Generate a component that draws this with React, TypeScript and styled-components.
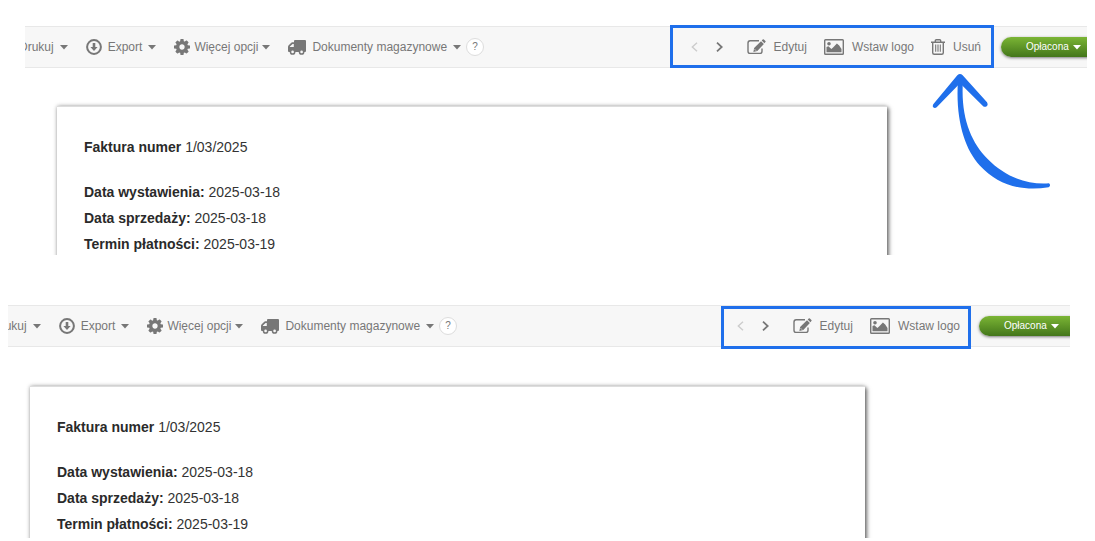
import React from 'react';
import styled, { createGlobalStyle } from 'styled-components';

const GlobalStyle = createGlobalStyle`
  *, *::before, *::after { box-sizing: border-box; }
  body {
    margin: 0;
    background: #fff;
    font-family: "Liberation Sans", Arial, sans-serif;
  }
`;

const Page = styled.main`
  display: flex;
  flex-direction: column;
  gap: 50px;
  padding-top: 26px;
`;

const Panel = styled.section<{ $left: number; $right: number }>`
  margin: -1px ${p => p.$right}px 0 ${p => p.$left}px;
  padding-top: 1px;
  overflow: hidden;
`;

const Toolbar = styled.div`
  display: flex;
  align-items: center;
  justify-content: space-between;
  height: 42px;
  background: #f7f7f7;
  border-top: 1px solid #e8e8e8;
  border-bottom: 1px solid #e8e8e8;
`;

const MenuGroup = styled.div`
  display: flex;
  align-items: center;
  gap: 18px;
`;

const ToolButton = styled.button<{ $gap?: number }>`
  display: flex;
  align-items: center;
  gap: ${p => p.$gap ?? 6}px;
  padding: 0;
  border: 0;
  background: none;
  color: #777;
  font: 12px/16px "Liberation Sans", Arial, sans-serif;
  white-space: nowrap;
  cursor: pointer;

  &:disabled { color: #ccc; cursor: default; }
  svg { display: block; flex: none; }
`;

const FirstItem = styled.div<{ $shift: number }>`
  margin-left: -${p => p.$shift}px;
`;

const WithHelp = styled.div`
  display: flex;
  align-items: center;
  gap: 5px;
`;

const HelpButton = styled.button`
  width: 18px;
  height: 18px;
  padding: 0;
  border: 1px solid #ddd;
  border-radius: 50%;
  background: #fff;
  color: #777;
  font: 10px/16px "Liberation Sans", Arial, sans-serif;
  text-align: center;
`;

const RightSide = styled.div<{ $gap: number }>`
  display: flex;
  align-items: center;
  gap: ${p => p.$gap}px;
`;

const Highlighted = styled.div<{ $left: number; $right: number; $drop: number }>`
  position: relative;
  display: flex;
  align-items: center;
  gap: 17px;
  height: 42px;
  padding: 0 ${p => p.$right}px 0 ${p => p.$left}px;

  &::after {
    content: '';
    position: absolute;
    inset: ${p => p.$drop}px 0 auto;
    height: 43px;
    border: 3px solid #1f6feb;
    pointer-events: none;
  }
`;

const Pager = styled.div`
  display: flex;
  gap: 18px;
  margin-right: 7px;
`;

const StatusButton = styled.button<{ $clip: number }>`
  display: flex;
  align-items: center;
  gap: 4px;
  width: 110px;
  height: 20px;
  margin-right: -${p => p.$clip}px;
  padding: 0 0 0 25px;
  border: 0;
  border-radius: 10px;
  background: linear-gradient(#7bb535, #43761a);
  box-shadow: 0 1px 3px rgba(0, 0, 0, 0.5);
  color: #fff;
  font: 10px/20px "Liberation Sans", Arial, sans-serif;
  white-space: nowrap;
`;

const Arrow = styled.svg`
  position: absolute;
  top: 47px;
  right: -58px;
  z-index: 2;
  pointer-events: none;
`;

const Sheet = styled.article<{ $top: number; $left: number; $right: number; $crop: number }>`
  margin: ${p => p.$top}px ${p => p.$right}px -${p => p.$crop}px ${p => p.$left}px;
  padding: 27px 27px 12px;
  background: #fff;
  border-top: 1px solid #ddd;
  box-shadow: 0 0 4px rgba(0, 0, 0, 0.3), 2px 2px 4px rgba(0, 0, 0, 0.5);
  color: #333;
  font-size: 14px;
  line-height: 26px;
`;

const Title = styled.p`
  margin: 0 0 19px;
`;

const Line = styled.p`
  margin: 0;
`;

const Bold = styled.strong`
  color: #2a2a2a;
`;

const Caret = () => (
  <svg width="8" height="5" viewBox="0 0 8 5" aria-hidden="true">
    <path d="M0 0h8L4 4.6z" fill="currentColor" />
  </svg>
);

const ExportIcon = () => (
  <svg width="16" height="16" viewBox="0 0 16 16" aria-hidden="true">
    <circle cx="8" cy="8" r="6.9" fill="none" stroke="currentColor" strokeWidth="2" />
    <path d="M6.7 4h2.6v3.9h2.3L8 11.9 4.4 7.9h2.3z" fill="currentColor" />
  </svg>
);

const GearIcon = () => (
  <svg width="16" height="16" viewBox="0 0 1536 1536" aria-hidden="true">
    <path
      fill="currentColor"
      d="M1024 768q0-106-75-181t-181-75-181 75-75 181 75 181 181 75 181-75 75-181zm512-109v222q0 12-8 23t-20 13l-185 28q-19 54-39 91 35 50 107 138 10 12 10 25t-9 23q-27 37-99 108t-94 71q-12 0-26-9l-138-108q-44 23-91 38-16 136-29 186-7 28-36 28H657q-14 0-24.500-8.500T621 1506l-28-184q-49-16-90-37l-141 107q-10 9-25 9-14 0-25-11-126-114-165-168-7-10-7-23 0-12 8-23 15-21 51-66.500t54-70.500q-27-50-41-99L29 913q-13-2-21-12.500T0 877V655q0-12 8-23t19-13l186-28q14-46 39-92-40-57-107-138-10-12-10-24 0-10 9-23 26-36 98.500-107.500T337 135q13 0 26 10l138 107q44-23 91-38 16-136 29-186 7-28 36-28h222q14 0 24.500 8.500T915 30l28 184q49 16 90 37l142-107q9-9 24-9 13 0 25 10 129 119 165 170 7 8 7 22 0 12-8 23-15 21-51 66.500t-54 70.500q26 50 41 98l183 28q13 2 21 12.500t8 23.500z"
    />
  </svg>
);

const TruckIcon = () => (
  <svg width="18" height="16" viewBox="0 0 18 16" aria-hidden="true">
    <path
      fill="currentColor"
      fillRule="evenodd"
      d="M7 1h10q1 0 1 1v10q0 1-1 1H1Q0 13 0 12V8q0-1 .7-1.700L3 4q.6-.7 1.400-.7H6V2q0-1 1-1zM5.800 4.900H4.600L1.900 7.600V8h3.900z"
    />
    <circle cx="4.600" cy="12.900" r="2.100" fill="#f7f7f7" stroke="currentColor" strokeWidth="1.500" />
    <circle cx="13.600" cy="12.900" r="2.100" fill="#f7f7f7" stroke="currentColor" strokeWidth="1.500" />
  </svg>
);

const ChevronIcon = ({ next }: { next?: boolean }) => (
  <svg width="7" height="10" viewBox="0 0 7 10" aria-hidden="true">
    <path
      d={next ? 'M1 0.700L5.700 5 1 9.300' : 'M6 0.700L1.300 5 6 9.300'}
      fill="none"
      stroke="currentColor"
      strokeWidth={next ? 1.8 : 1.4}
    />
  </svg>
);

const EditIcon = () => (
  <svg width="19" height="16" viewBox="0 0 19 16" aria-hidden="true">
    <path
      d="M12 1.700H3.200Q1 1.700 1 3.900v8.300q0 2.200 2.200 2.200h9.600q2.200 0 2.200-2.200V9.600"
      fill="none"
      stroke="currentColor"
      strokeWidth="1.400"
    />
    <path d="M14 2.300l2.900 2.700-6.600 6.900-3.900 1.200 .7-4z" fill="currentColor" />
    <path d="M14.700 1.500l1-1q.6-.5 1.200 0l1.500 1.400q.6.600 0 1.200l-1 1.100z" fill="currentColor" />
    <path d="M7.600 10.200l1.500 1.500" stroke="#f7f7f7" strokeWidth=".7" fill="none" />
  </svg>
);

const PictureIcon = () => (
  <svg width="20" height="16" viewBox="0 0 20 16" aria-hidden="true">
    <rect x=".7" y=".7" width="18.600" height="14.600" rx=".8" fill="none" stroke="currentColor" strokeWidth="1.400" />
    <circle cx="5" cy="4.800" r="1.800" fill="currentColor" />
    <path d="M2.500 13.300V7.900l1.900-.6 3 2.700 1.900-1.700 3.600-3.900 2.300 2.100 2.300 3.400v3.400z" fill="currentColor" />
  </svg>
);

const TrashIcon = () => (
  <svg width="14" height="16" viewBox="0 0 14 16" aria-hidden="true">
    <path
      d="M0 3.200h14M4.300 3V1.700Q4.300.7 5.300.7h3.400q1 0 1 1V3M1.700 3.500v10.300q0 1.500 1.500 1.500h7.600q1.500 0 1.500-1.500V3.500"
      fill="none"
      stroke="currentColor"
      strokeWidth="1.400"
    />
    <path d="M4.700 5.600v7.200M7 5.600v7.200M9.300 5.600v7.200" stroke="currentColor" strokeWidth="1.100" />
  </svg>
);

const CurvedArrow = () => (
  <Arrow width="120" height="116" viewBox="186 174 360 348" aria-hidden="true">
    <g fill="#1f6feb">
      <path d="M264 195C256 310 282 400 330 452C382 508 450 530 536 517Q544 511 537 505C470 510 404 484 353 432C302 380 271 305 279 195Z" />
      <path d="M262 181Q270 173 278 181L351 262Q356 272 348 275Q343 277 338 272L270 205L200 277Q194 281 189 276Q187 271 191 266Z" />
    </g>
  </Arrow>
);

interface InvoiceViewProps {
  left: number;
  right: number;
  menuShift: number;
  groupLeft: number;
  groupRight: number;
  drop: number;
  statusGap: number;
  statusClip: number;
  sheetTop: number;
  sheetLeft: number;
  sheetRight: number;
  crop: number;
  deletable?: boolean;
}

const InvoiceView = (p: InvoiceViewProps) => (
  <Panel $left={p.left} $right={p.right}>
    <Toolbar>
      <MenuGroup>
        <FirstItem $shift={p.menuShift}>
          <ToolButton>Drukuj<Caret /></ToolButton>
        </FirstItem>
        <ToolButton><ExportIcon />Export<Caret /></ToolButton>
        <ToolButton $gap={4}><GearIcon />Więcej opcji<Caret /></ToolButton>
        <WithHelp>
          <ToolButton><TruckIcon />Dokumenty magazynowe<Caret /></ToolButton>
          <HelpButton>?</HelpButton>
        </WithHelp>
      </MenuGroup>
      <RightSide $gap={p.statusGap}>
        <Highlighted $left={p.groupLeft} $right={p.groupRight} $drop={p.drop}>
          <Pager>
            <ToolButton disabled aria-label="Poprzednia"><ChevronIcon /></ToolButton>
            <ToolButton aria-label="Następna"><ChevronIcon next /></ToolButton>
          </Pager>
          <ToolButton $gap={8}><EditIcon />Edytuj</ToolButton>
          <ToolButton $gap={8}><PictureIcon />Wstaw logo</ToolButton>
          {p.deletable && <ToolButton $gap={8}><TrashIcon />Usuń</ToolButton>}
          {p.deletable && <CurvedArrow />}
        </Highlighted>
        <StatusButton $clip={p.statusClip}>Opłacona<Caret /></StatusButton>
      </RightSide>
    </Toolbar>
    <Sheet $top={p.sheetTop} $left={p.sheetLeft} $right={p.sheetRight} $crop={p.crop}>
      <Title><Bold>Faktura numer</Bold> 1/03/2025</Title>
      <Line><Bold>Data wystawienia:</Bold> 2025-03-18</Line>
      <Line><Bold>Data sprzedaży:</Bold> 2025-03-18</Line>
      <Line><Bold>Termin płatności:</Bold> 2025-03-19</Line>
    </Sheet>
  </Panel>
);

export default function App() {
  return (
    <>
      <GlobalStyle />
      <Page>
        <InvoiceView
          left={25} right={8} menuShift={6} groupLeft={21} groupRight={13} drop={-1}
          statusGap={7} statusClip={24} sheetTop={38} sheetLeft={32} sheetRight={200} crop={14} deletable
        />
        <InvoiceView
          left={8} right={25} menuShift={16} groupLeft={16} groupRight={11} drop={1}
          statusGap={8} statusClip={19} sheetTop={39} sheetLeft={22} sheetRight={205} crop={11}
        />
      </Page>
    </>
  );
}
